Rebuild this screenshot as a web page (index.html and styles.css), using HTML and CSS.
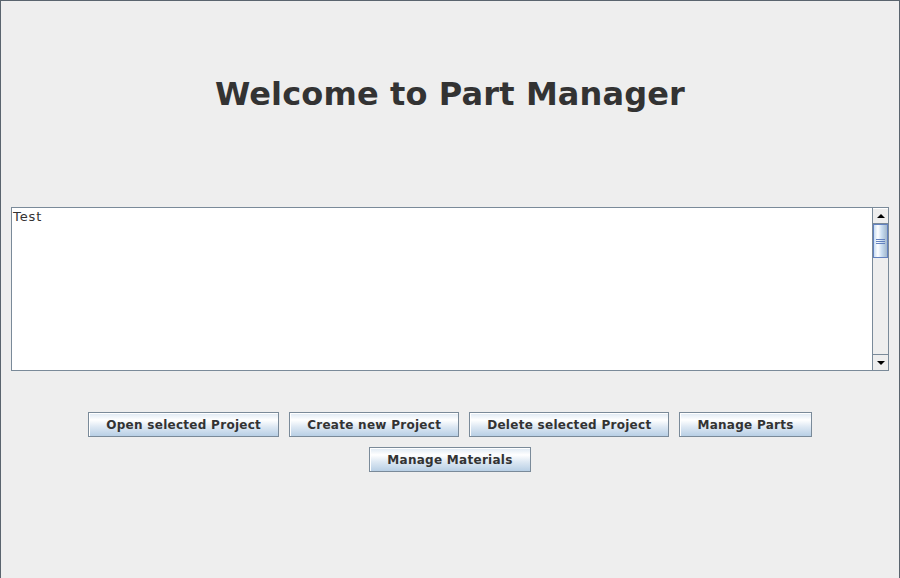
FILE: index.html
```html
<!DOCTYPE html>
<html>
<head>
<meta charset="utf-8">
<link rel="stylesheet" href="styles.css">
</head>
<body>
<div class="window">
  <div class="header">
    <h1 class="title">Welcome to Part Manager</h1>
  </div>
  <div class="scrollpane">
    <div class="list">
      <div class="item">Test</div>
    </div>
    <div class="scrollbar">
      <div class="sb-btn sb-up"><span class="tri-up"></span></div>
      <div class="sb-track">
        <div class="sb-thumb"><span class="grip"></span></div>
      </div>
      <div class="sb-btn sb-down"><span class="tri-down"></span></div>
    </div>
  </div>
  <div class="buttons">
    <button class="btn">Open selected Project</button>
    <button class="btn">Create new Project</button>
    <button class="btn">Delete selected Project</button>
    <button class="btn">Manage Parts</button>
    <button class="btn">Manage Materials</button>
  </div>
</div>
</body>
</html>
```
FILE: styles.css
```css
html, body {
  margin: 0;
  padding: 0;
  background: #eeeeee;
}
.window {
  box-sizing: border-box;
  width: 900px;
  height: 578px;
  border: 1px solid #5a646e;
  border-bottom: none;
  background: #eeeeee;
  padding: 0 10px;
  display: flex;
  flex-direction: column;
  font-family: "DejaVu Sans", sans-serif;
}
.header {
  height: 206px;
  display: flex;
  justify-content: center;
}
.title {
  margin: 73px 0 0 0;
  font-size: 32px;
  line-height: 40px;
  font-weight: bold;
  letter-spacing: 0.13px;
  color: #333333;
}
.scrollpane {
  height: 164px;
  box-sizing: border-box;
  border: 1px solid #7a8a99;
  background: #ffffff;
  display: flex;
}
.list {
  flex: 1;
  padding: 1px 1px;
}
.item {
  font-size: 13px;
  line-height: 15px;
  letter-spacing: 0.9px;
  color: #333333;
}
.scrollbar {
  width: 16px;
  display: flex;
  flex-direction: column;
  background: #eeeeee;
  border-left: 1px solid #7a8a99;
  box-sizing: border-box;
}
.sb-btn {
  height: 16px;
  box-sizing: border-box;
  background: #eeeeee;
  display: flex;
  align-items: center;
  justify-content: center;
}
.sb-up {
  border-bottom: 1px solid #7a8a99;
  border-top: 1px solid #ffffff;
}
.sb-down {
  border-top: 1px solid #7a8a99;
}
.tri-up {
  width: 0;
  height: 0;
  border-left: 4px solid transparent;
  border-right: 4px solid transparent;
  border-bottom: 4px solid #000000;
}
.tri-down {
  width: 0;
  height: 0;
  border-left: 4px solid transparent;
  border-right: 4px solid transparent;
  border-top: 4px solid #000000;
}
.sb-track {
  flex: 1;
}
.sb-thumb {
  height: 34px;
  box-sizing: border-box;
  border: 1px solid #6382bf;
  background: linear-gradient(to right, #c8ddf2 0%, #ffffff 30%, #c8ddf2 60%, #a3b8cc 100%);
  display: flex;
  align-items: center;
  justify-content: center;
}
.grip {
  width: 9px;
  height: 5px;
  background: repeating-linear-gradient(to bottom, #6382bf 0px, #6382bf 1px, transparent 1px, transparent 2px);
}
.buttons {
  margin-top: 41px;
  display: flex;
  flex-wrap: wrap;
  justify-content: center;
  gap: 10px;
  padding: 0 60px;
}
.btn {
  height: 25px;
  box-sizing: border-box;
  padding: 0 17px;
  border: 1px solid #7a8a99;
  box-shadow: inset 1px 1px 0 #ffffff;
  border-radius: 0;
  background: linear-gradient(to bottom, #dde8f3 0%, #ffffff 30%, #dde8f3 60%, #b8cfe5 100%);
  font-family: "DejaVu Sans", sans-serif;
  font-weight: bold;
  font-size: 12px;
  letter-spacing: 0.28px;
  color: #333333;
  margin: 0;
}
```
